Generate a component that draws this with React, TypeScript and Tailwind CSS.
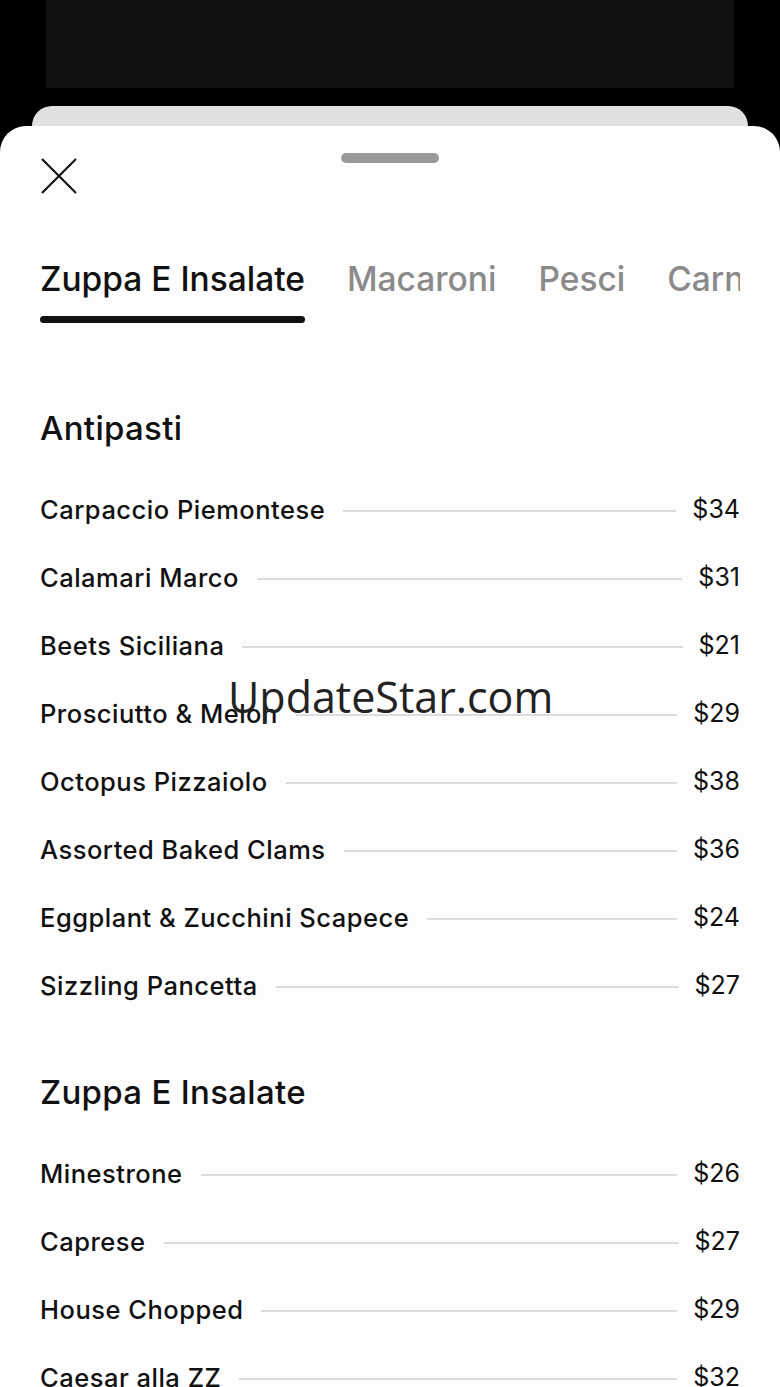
import React from 'react';

const ANTIPASTI = [
    { name: 'Carpaccio Piemontese', price: '$34' },
    { name: 'Calamari Marco', price: '$31' },
    { name: 'Beets Siciliana', price: '$21' },
    { name: 'Prosciutto & Melon', price: '$29' },
    { name: 'Octopus Pizzaiolo', price: '$38' },
    { name: 'Assorted Baked Clams', price: '$36' },
    { name: 'Eggplant & Zucchini Scapece', price: '$24' },
    { name: 'Sizzling Pancetta', price: '$27' },
];

const ZUPPA = [
    { name: 'Minestrone', price: '$26' },
    { name: 'Caprese', price: '$27' },
    { name: 'House Chopped', price: '$29' },
    { name: 'Caesar alla ZZ', price: '$32' },
];

const TABS = ['Zuppa E Insalate', 'Macaroni', 'Pesci', 'Carne'];

const MenuRow: React.FC<{ name: string; price: string }> = ({ name, price }) => (
    <div className="flex items-center h-[68px]">
        <span className="text-[25.5px] font-medium tracking-[0.5px] text-[#111] whitespace-nowrap">{name}</span>
        <div className="flex-1 h-[2px] bg-[#dcdcdc] ml-[18px] mr-[16px] mt-[2px]" />
        <span className="text-[25px] text-[#111]">{price}</span>
    </div>
);

const Section: React.FC<{ title: string; items: { name: string; price: string }[] }> = ({ title, items }) => (
    <section>
        <h2 className="text-[33px] font-medium tracking-[0.3px] text-[#111] h-[48px] leading-[48px]">{title}</h2>
        <div className="mt-[24px]">
            {items.map((item) => (
                <MenuRow key={item.name} name={item.name} price={item.price} />
            ))}
        </div>
    </section>
);

const App: React.FC = () => {
    return (
        <div
            className="relative w-full h-[1387px] bg-black overflow-hidden flex flex-col"
            style={{ fontFamily: 'Inter, "Noto Sans", sans-serif' }}
        >
            {/* screen behind */}
            <div className="mx-[46px] h-[88px] bg-[#111111] shrink-0" />
            <div className="mx-[32px] mt-[18px] h-[40px] bg-[#e0e0e0] rounded-t-[20px] shrink-0" />

            {/* sheet */}
            <div className="relative -mt-[20px] flex-1 bg-[#fdfdfd] rounded-t-[26px]">
                <div className="absolute left-1/2 -translate-x-1/2 top-[27px] w-[98px] h-[10px] rounded-full bg-[#999999]" />

                <button className="ml-[41px] mt-[32px] w-[36px] h-[36px] block" aria-label="Close">
                    <svg viewBox="0 0 36 36" className="w-[36px] h-[36px]" fill="none" stroke="#111" strokeWidth="2.2">
                        <path d="M1 1 L35 35 M35 1 L1 35" />
                    </svg>
                </button>

                {/* tabs */}
                <div className="mt-[64px] ml-[40px] mr-[40px] overflow-hidden">
                    <div className="flex gap-[42px] whitespace-nowrap">
                        {TABS.map((tab, i) => (
                            <div key={tab} className="flex flex-col">
                                <span
                                    className={`text-[33.5px] leading-[42px] font-medium ${
                                        i === 0 ? 'text-[#111]' : 'text-[#8a8a8a]'
                                    }`}
                                >
                                    {tab}
                                </span>
                                <div
                                    className={`mt-[16px] h-[7px] rounded-full ${
                                        i === 0 ? 'bg-[#111]' : 'bg-transparent'
                                    }`}
                                />
                            </div>
                        ))}
                    </div>
                </div>

                <div className="px-[40px] pt-[81px]">
                    <Section title="Antipasti" items={ANTIPASTI} />
                    <div className="h-[48px]" />
                    <Section title="Zuppa E Insalate" items={ZUPPA} />
                </div>
            </div>

            {/* watermark */}
            <div
                className="absolute left-[228px] top-[665px] text-[43px] text-[#222] pointer-events-none"
                style={{ fontFamily: '"Open Sans", sans-serif' }}
            >
                UpdateStar.com
            </div>
        </div>
    );
};

export default App;
